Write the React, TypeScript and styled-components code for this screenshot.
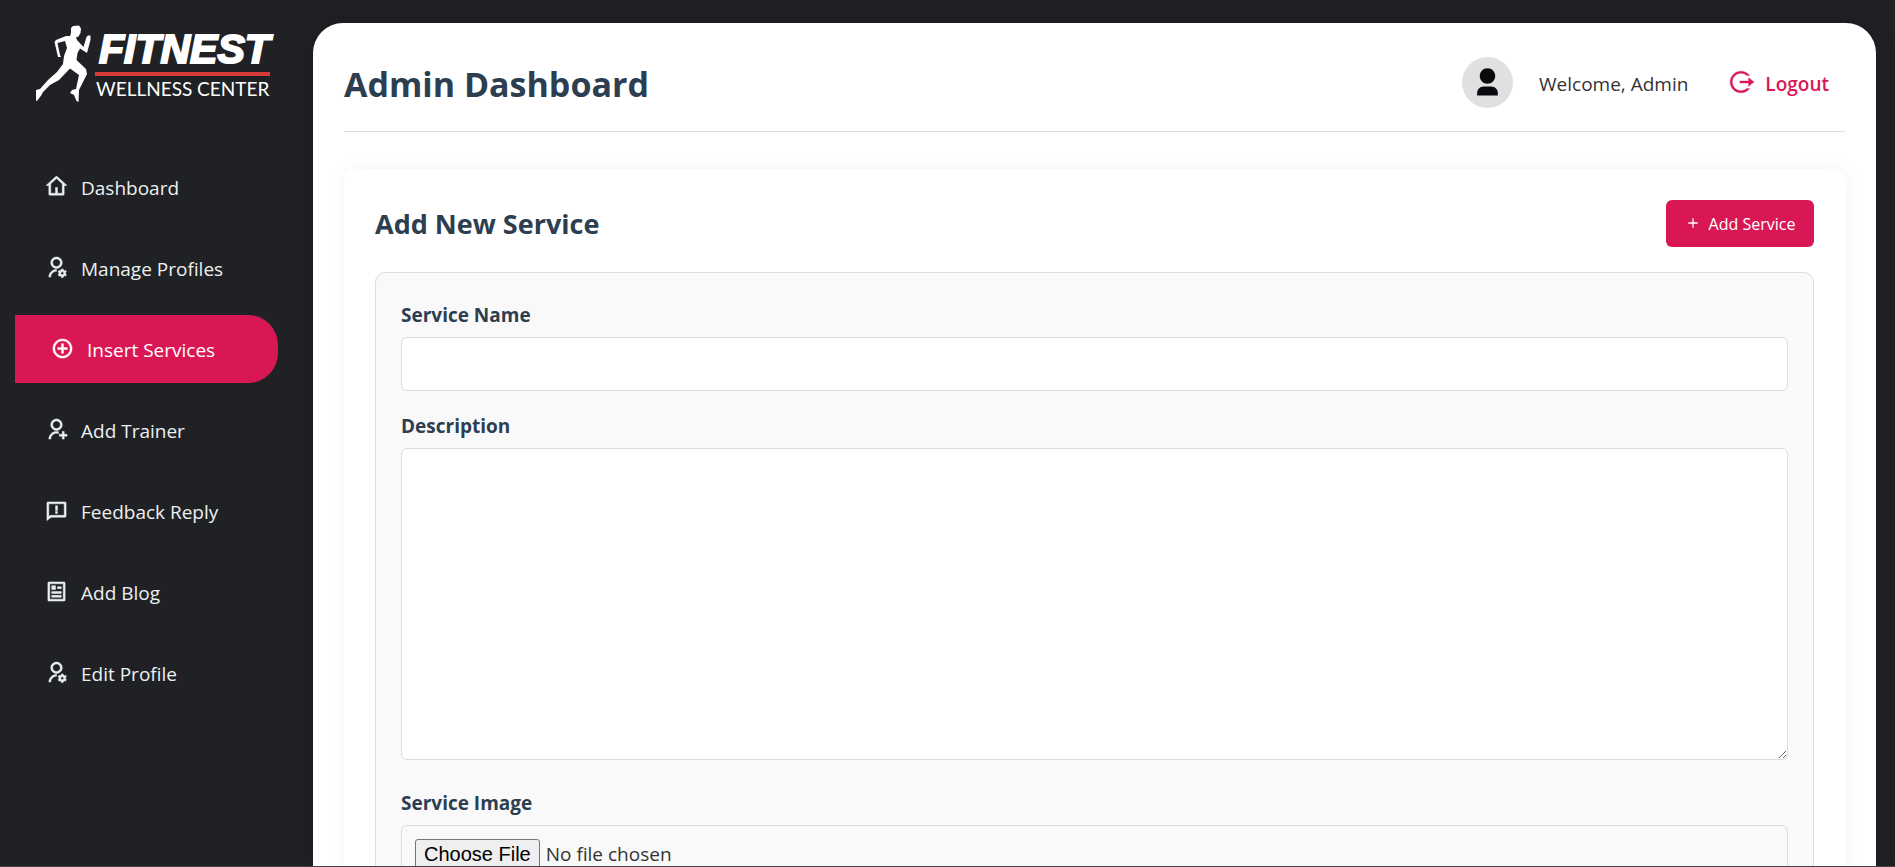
import React from "react";
import styled, { createGlobalStyle } from "styled-components";
import {
  RiUserSettingsLine,
  RiAddCircleLine,
  RiUserAddLine,
  RiFeedbackLine,
  RiArticleLine,
  RiUser3Fill,
  RiLogoutCircleRLine,
  RiAddLine,
} from "react-icons/ri";

const GlobalStyle = createGlobalStyle`
  * { box-sizing: border-box; margin: 0; padding: 0; }
  html, body, #root { height: 100%; }
  body {
    background: #202125;
    color: #333;
    font-family: "Open Sans", "Noto Sans", sans-serif;
    font-size: 19px;
  }
`;

const Shell = styled.div`
  display: flex;
  height: 100vh;
  overflow: hidden;
  border-bottom: 1px solid #444;
`;

const Sidebar = styled.aside`
  flex: 0 0 313px;
  min-width: 0;
  padding: 23px 35px 0 15px;
`;

const Logo = styled.svg`
  display: block;
  width: 246px;
  height: 84px;
  margin: 0 0 46px 17px;
  overflow: visible;
`;

const Nav = styled.nav`
  display: flex;
  flex-direction: column;
  gap: 13px;
`;

const NavItem = styled.a<{ $active?: boolean }>`
  display: flex;
  align-items: center;
  gap: 13px;
  height: 68px;
  padding-top: 2px;
  padding-left: ${(p) => (p.$active ? 36 : 30)}px;
  border-radius: 0 30px 30px 0;
  background: ${(p) => (p.$active ? "#da1755" : "transparent")};
  color: ${(p) => (p.$active ? "#fff" : "#ecf0f1")};
  text-decoration: none;
  svg {
    width: 23px;
    height: 23px;
    margin-bottom: 4px;
    stroke: currentColor;
    stroke-width: 0.5px;
  }
`;

const Main = styled.main`
  flex: 1;
  min-width: 0;
  margin: 23px 19px 0 0;
  padding: 0 31px;
  overflow: hidden;
  background: #fff;
  border-radius: 30px 30px 0 0;
  box-shadow: 0 0 20px rgba(0, 0, 0, 0.2);
`;

const Header = styled.header`
  display: flex;
  align-items: center;
  justify-content: space-between;
  height: 109px;
  padding: 13px 16px 0 0;
  border-bottom: 1px solid #ddd;
`;

const PageTitle = styled.h1`
  color: #2c3e50;
  font-size: 34px;
  line-height: 48px;
  font-weight: 700;
`;

const UserArea = styled.div`
  display: flex;
  align-items: center;
`;

const Avatar = styled.span`
  display: grid;
  place-items: center;
  width: 51px;
  height: 51px;
  margin: 0 26px 2px 0;
  border-radius: 50%;
  background: #e0e0e0;
  color: #080a0e;
  svg { width: 31px; height: 31px; }
`;

const Logout = styled.a`
  display: flex;
  align-items: center;
  gap: 11px;
  margin-left: 40px;
  color: #da1755;
  font-weight: 600;
  text-decoration: none;
  svg {
    width: 26px;
    height: 26px;
    margin-bottom: 3px;
    stroke: currentColor;
    stroke-width: 0.3px;
  }
`;

const Card = styled.section`
  margin-top: 37px;
  padding: 31px;
  border-radius: 10px;
  background: #fff;
  box-shadow: 0 0 20px rgba(0, 0, 0, 0.05);
`;

const CardHead = styled.div`
  display: flex;
  align-items: center;
  justify-content: space-between;
  margin-bottom: 25px;
`;

const CardTitle = styled.h2`
  color: #2c3e50;
  font-size: 27px;
  line-height: 36px;
  font-weight: 700;
`;

const AddButton = styled.button`
  display: flex;
  align-items: center;
  justify-content: center;
  gap: 8px;
  width: 148px;
  height: 47px;
  border: 0;
  border-radius: 6px;
  background: #da1755;
  color: #fff;
  font: 400 16px "Open Sans", sans-serif;
  svg { width: 16px; height: 16px; margin-bottom: 2px; }
`;

const Form = styled.form`
  display: flex;
  flex-direction: column;
  gap: 21px;
  padding: 28px 25px;
  border: 1px solid #ddd;
  border-radius: 10px;
  background: #f9f9f9;
`;

const Field = styled.div`
  display: flex;
  flex-direction: column;
`;

const Label = styled.label`
  margin-bottom: 8px;
  color: #2c3e50;
  font-size: 19px;
  line-height: 28px;
  font-weight: 700;
`;

const TextInput = styled.input`
  height: 54px;
  padding: 0 13px;
  border: 1px solid #ddd;
  border-radius: 6px;
  background: #fff;
  font: inherit;
`;

const TextArea = styled.textarea`
  height: 312px;
  margin-bottom: 8px;
  padding: 13px;
  border: 1px solid #ddd;
  border-radius: 6px;
  background: #fff;
  font: inherit;
  resize: vertical;
`;

const FileInput = styled.input`
  padding: 13px;
  border: 1px solid #ddd;
  border-radius: 6px;
  color: #333;
  font: inherit;
  &::file-selector-button {
    padding: 0 8px;
    margin-right: 6px;
    border: 1px solid #767676;
    border-radius: 3px;
    background: #efefef;
    color: #000;
    font: 20px "Liberation Sans", Arial, sans-serif;
    line-height: 28px;
  }
`;

function HomeIcon() {
  return (
    <svg viewBox="0 0 24 24" fill="currentColor" aria-hidden="true">
      <path d="M19 21H5C4.448 21 4 20.552 4 20V11H1L11.327 1.612C11.709 1.265 12.291 1.265 12.673 1.612L23 11H20V20C20 20.552 19.552 21 19 21ZM13 19H18V9.158L12 3.703L6 9.158V19H11V13H13V19Z" />
    </svg>
  );
}

const navItems = [
  { label: "Dashboard", Icon: HomeIcon },
  { label: "Manage Profiles", Icon: RiUserSettingsLine },
  { label: "Insert Services", Icon: RiAddCircleLine, active: true },
  { label: "Add Trainer", Icon: RiUserAddLine },
  { label: "Feedback Reply", Icon: RiFeedbackLine },
  { label: "Add Blog", Icon: RiArticleLine },
  { label: "Edit Profile", Icon: RiUserSettingsLine },
];

function FitnestLogo() {
  return (
    <Logo viewBox="32 23 246 84" role="img" aria-label="Fitnest Wellness Center">
      <g fill="#fff">
        <path d="M71 28L73 26L79 25.500L81 28.500L80.500 33L78.500 36.500L76 37.500L77 40L83.500 47L86.500 37L88 35.500L90.500 35.500L90.500 40L87 53L80 48.500L77.500 53L76.500 60L86 69L87 74L79 90L78.500 102L76.500 101L74 95L70 93L72 90L76 89L79 75L70 68.500L59 80L50 85L43 92L41.500 95L37 101L36 100.500L36 90L40 89L48 80L57 72L63 64L64 56L67 48L65 41L57.500 43L60 55L61 57L58 57L54.500 42L56 40L66 36L70 36L71 33Z" />
      </g>
      <text x="99" y="63" fill="#fff" stroke="#fff" strokeWidth="2" fontFamily="Liberation Sans" fontStyle="italic" fontWeight="700" fontSize="41">FITNEST</text>
      <rect x="95" y="72" width="175" height="4" fill="#d63a3a" />
      <text x="96" y="96" fill="#fff" fontFamily="Lato" fontSize="19">WELLNESS CENTER</text>
    </Logo>
  );
}

export default function App() {
  return (
    <>
      <GlobalStyle />
      <Shell>
        <Sidebar>
          <FitnestLogo />
          <Nav>
            {navItems.map(({ label, Icon, active }) => (
              <NavItem key={label} href="#" $active={active}>
                <Icon />
                <span>{label}</span>
              </NavItem>
            ))}
          </Nav>
        </Sidebar>
        <Main>
          <Header>
            <PageTitle>Admin Dashboard</PageTitle>
            <UserArea>
              <Avatar><RiUser3Fill /></Avatar>
              <span>Welcome, Admin</span>
              <Logout href="#"><RiLogoutCircleRLine /><span>Logout</span></Logout>
            </UserArea>
          </Header>
          <Card>
            <CardHead>
              <CardTitle>Add New Service</CardTitle>
              <AddButton type="button"><RiAddLine /><span>Add Service</span></AddButton>
            </CardHead>
            <Form>
              <Field>
                <Label htmlFor="service-name">Service Name</Label>
                <TextInput id="service-name" type="text" />
              </Field>
              <Field>
                <Label htmlFor="description">Description</Label>
                <TextArea id="description" />
              </Field>
              <Field>
                <Label htmlFor="service-image">Service Image</Label>
                <FileInput id="service-image" type="file" />
              </Field>
            </Form>
          </Card>
        </Main>
      </Shell>
    </>
  );
}
